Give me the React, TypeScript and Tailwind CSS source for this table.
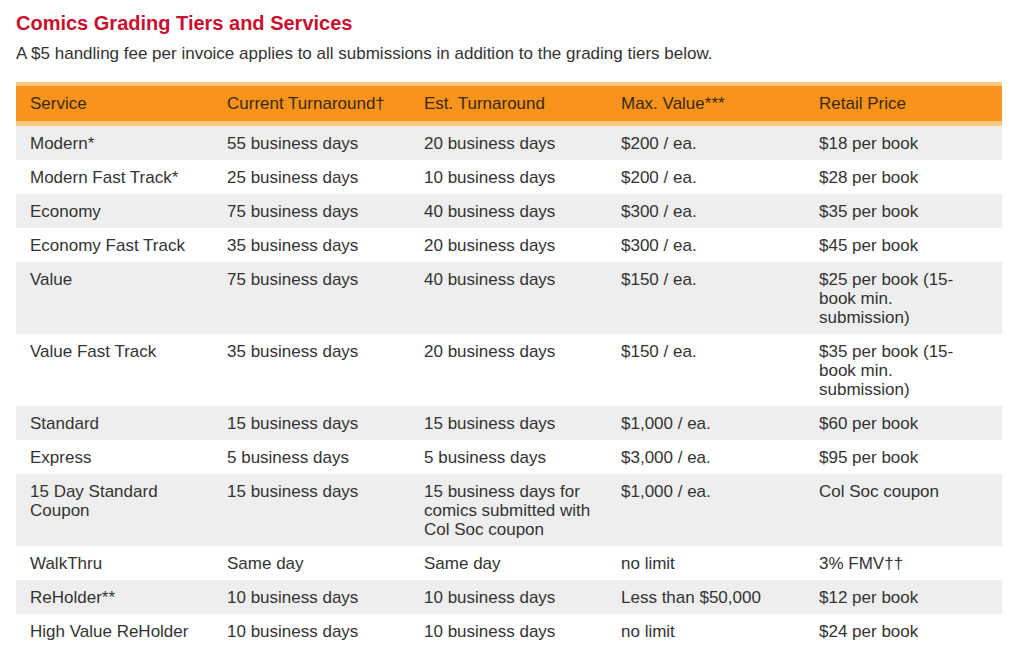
const rows: string[][] = [
  ['Modern*', '55 business days', '20 business days', '$200 / ea.', '$18 per book'],
  ['Modern Fast Track*', '25 business days', '10 business days', '$200 / ea.', '$28 per book'],
  ['Economy', '75 business days', '40 business days', '$300 / ea.', '$35 per book'],
  ['Economy Fast Track', '35 business days', '20 business days', '$300 / ea.', '$45 per book'],
  ['Value', '75 business days', '40 business days', '$150 / ea.', '$25 per book (15-book min. submission)'],
  ['Value Fast Track', '35 business days', '20 business days', '$150 / ea.', '$35 per book (15-book min. submission)'],
  ['Standard', '15 business days', '15 business days', '$1,000 / ea.', '$60 per book'],
  ['Express', '5 business days', '5 business days', '$3,000 / ea.', '$95 per book'],
  ['15 Day Standard Coupon', '15 business days', '15 business days for comics submitted with Col Soc coupon', '$1,000 / ea.', 'Col Soc coupon'],
  ['WalkThru', 'Same day', 'Same day', 'no limit', '3% FMV††'],
  ['ReHolder**', '10 business days', '10 business days', 'Less than $50,000', '$12 per book'],
  ['High Value ReHolder', '10 business days', '10 business days', 'no limit', '$24 per book'],
];

const headers = ['Service', 'Current Turnaround†', 'Est. Turnaround', 'Max. Value***', 'Retail Price'];

export default function App() {
  return (
    <div className="min-h-screen bg-white pt-[11px] font-['Liberation_Sans',Arial,sans-serif] text-[#333]">
      <h1 className="ml-4 text-[20px] font-bold leading-[24px] text-[#c8102e]">
        Comics Grading Tiers and Services
      </h1>
      <p className="ml-4 mt-[9px] text-[17px] leading-[20px] text-[#333]">
        A $5 handling fee per invoice applies to all submissions in addition to the grading tiers below.
      </p>

      <table className="ml-4 mt-[18px] w-[986px] table-fixed border-collapse text-[17px] leading-[19px]">
        <colgroup>
          <col className="w-[197px]" />
          <col className="w-[197px]" />
          <col className="w-[197px]" />
          <col className="w-[198px]" />
          <col />
        </colgroup>
        <thead>
          <tr className="border-t-4 border-b-[5px] border-[#fbc97c] bg-[#f8931c]">
            {headers.map(h => (
              <th key={h} className="px-[14px] py-[8px] text-left font-normal text-[#3b2a12]">
                {h}
              </th>
            ))}
          </tr>
        </thead>
        <tbody>
          {rows.map((row, i) => (
            <tr key={i} className={i % 2 === 0 ? 'bg-[#eeeeee]' : 'bg-white'}>
              {row.map((cell, j) => (
                <td
                  key={j}
                  className={`px-[14px] py-[7.5px] align-top ${j === 4 ? 'pr-[40px]' : ''}`}
                >
                  {cell}
                </td>
              ))}
            </tr>
          ))}
        </tbody>
      </table>
    </div>
  );
}
